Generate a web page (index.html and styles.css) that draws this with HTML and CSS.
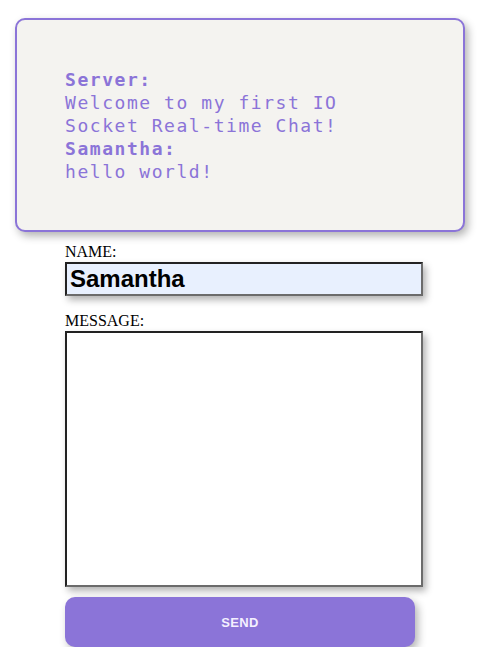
FILE: index.html
```html
<!DOCTYPE html>
<html>
<head>
<meta charset="utf-8">
<link rel="stylesheet" href="styles.css">
</head>
<body>
<div class="chat">
  <div class="msg"><b>Server:</b><br>Welcome to my first IO Socket Real-time Chat!</div>
  <div class="msg"><b>Samantha:</b><br>hello world!</div>
</div>
<form class="form">
  <label class="label" for="name">NAME:</label>
  <input class="name" id="name" type="text" value="Samantha">
  <label class="label label-msg" for="message">MESSAGE:</label>
  <textarea class="message" id="message"></textarea>
  <button class="send" type="button">SEND</button>
</form>
</body>
</html>
```
FILE: styles.css
```css
html, body {
  margin: 0;
  padding: 0;
  background: #ffffff;
}
body {
  padding: 18px 17px 0 15px;
  font-family: "Liberation Serif", serif;
  font-size: 16px;
}
.chat {
  box-sizing: border-box;
  width: 450px;
  height: 214px;
  border: 2px solid #8b74d8;
  border-radius: 10px;
  background: #f4f3f0;
  padding: 48px 48px 0 48px;
  box-shadow: 3px 4px 8px rgba(0, 0, 0, 0.3);
  font-family: "DejaVu Sans Mono", monospace;
  font-size: 18px;
  letter-spacing: 1.55px;
  line-height: 23px;
  color: #8b74d8;
}
.msg b {
  font-weight: bold;
}
.form {
  display: flex;
  flex-direction: column;
  align-items: flex-start;
  padding-left: 50px;
  margin-top: 11px;
}
.label {
  display: block;
  line-height: 18px;
  color: #000;
}
.label-msg {
  margin-top: 16px;
}
.name {
  box-sizing: border-box;
  width: 358px;
  height: 34px;
  margin: 1px 0 0 0;
  border: 2px solid #222;
  border-right-color: #6b6b6b;
  border-bottom-color: #6b6b6b;
  background: #e8f0fe;
  padding: 0 3px;
  font-family: "Liberation Sans", Arial, sans-serif;
  font-weight: bold;
  font-size: 24px;
  color: #000;
  box-shadow: 3px 4px 7px rgba(0, 0, 0, 0.3);
}
.message {
  box-sizing: border-box;
  width: 358px;
  height: 256px;
  margin: 1px 0 0 0;
  border: 2px solid #222;
  border-right-color: #6b6b6b;
  border-bottom-color: #6b6b6b;
  background: #fff;
  resize: none;
  box-shadow: 3px 4px 7px rgba(0, 0, 0, 0.3);
}
.send {
  box-sizing: border-box;
  width: 350px;
  height: 50px;
  margin-top: 10px;
  border: none;
  border-radius: 10px;
  background: #8b74d8;
  color: #f4f0ff;
  font-family: "Liberation Sans", Arial, sans-serif;
  font-weight: bold;
  font-size: 13px;
  letter-spacing: 0.3px;
  box-shadow: 3px 4px 8px rgba(0, 0, 0, 0.3);
}
```
